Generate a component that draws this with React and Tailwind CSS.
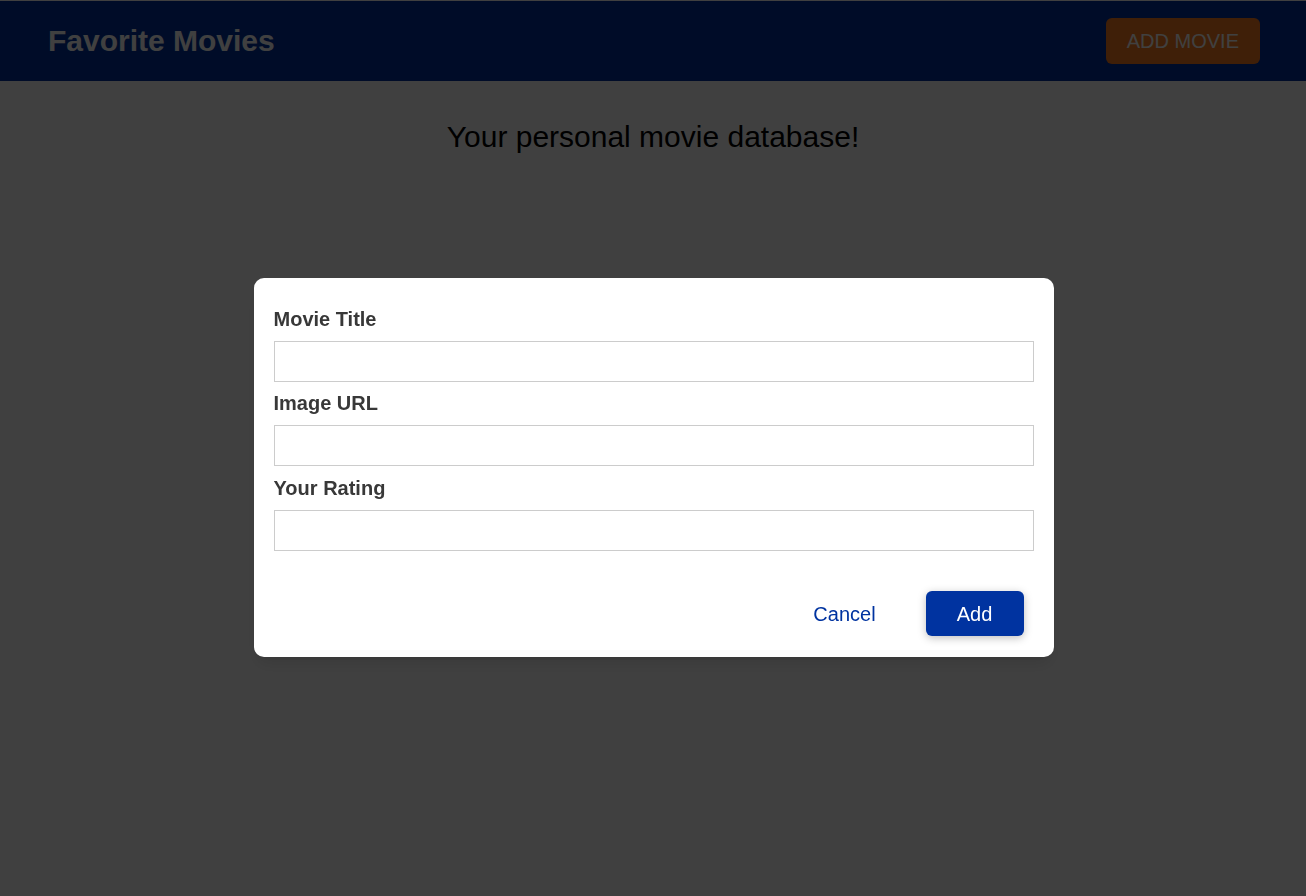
import { useState } from "react";

function Header() {
    return (
        <header className="bg-[#00329e] h-[80px] flex flex-row items-center justify-between pl-[48px] pr-[46px]">
            {/* Title */}
            <h1 className="text-white text-[30px] font-bold leading-none">Favorite Movies</h1>

            {/* Add Movie Button */}
            <button className="bg-[#fc7c20] text-white text-[20px] uppercase rounded-md h-[46px] px-[21px]">
                Add Movie
            </button>
        </header>
    );
}

function Field({ label, className = "" }) {
    return (
        <div className={"flex flex-col " + className}>
            <label className="text-[20px] font-bold text-[#383838] leading-[22px] mb-[11px]">{label}</label>
            <input type="text" className="h-[41px] border border-[#cccccc] bg-white px-2 outline-none" />
        </div>
    );
}

function AddMovieModal() {
    return (
        <div className="fixed inset-0 flex items-start justify-center pt-[278px] pl-px">
            <div className="w-[800px] bg-white rounded-[10px] shadow-lg px-[20px] pt-[30px] pb-[21px]">
                <div className="flex flex-col gap-[10px]">
                    <Field label="Movie Title" />
                    <Field label="Image URL" />
                    <Field label="Your Rating" className="mt-px" />
                </div>

                {/* Actions */}
                <div className="flex flex-row justify-end items-center gap-[32px] mt-[40px] pr-[10px]">
                    <button className="text-[#0033a0] text-[20px] h-[45px] w-[98px]">Cancel</button>
                    <button className="bg-[#0033a0] text-white text-[20px] h-[45px] w-[98px] rounded-md shadow-[0_2px_8px_rgba(0,0,0,0.26)]">
                        Add
                    </button>
                </div>
            </div>
        </div>
    );
}

export default function App() {
    const [open] = useState(true);

    return (
        <div className="min-h-screen bg-white pt-px font-['Liberation_Sans',Arial,sans-serif]">
            <Header />
            <main>
                <p className="text-center text-[30px] leading-[36px] text-black mt-[38px]">Your personal movie database!</p>
            </main>

            {open && (
                <>
                    {/* Backdrop */}
                    <div className="fixed inset-0 bg-black/75" />
                    <AddMovieModal />
                </>
            )}
        </div>
    );
}
